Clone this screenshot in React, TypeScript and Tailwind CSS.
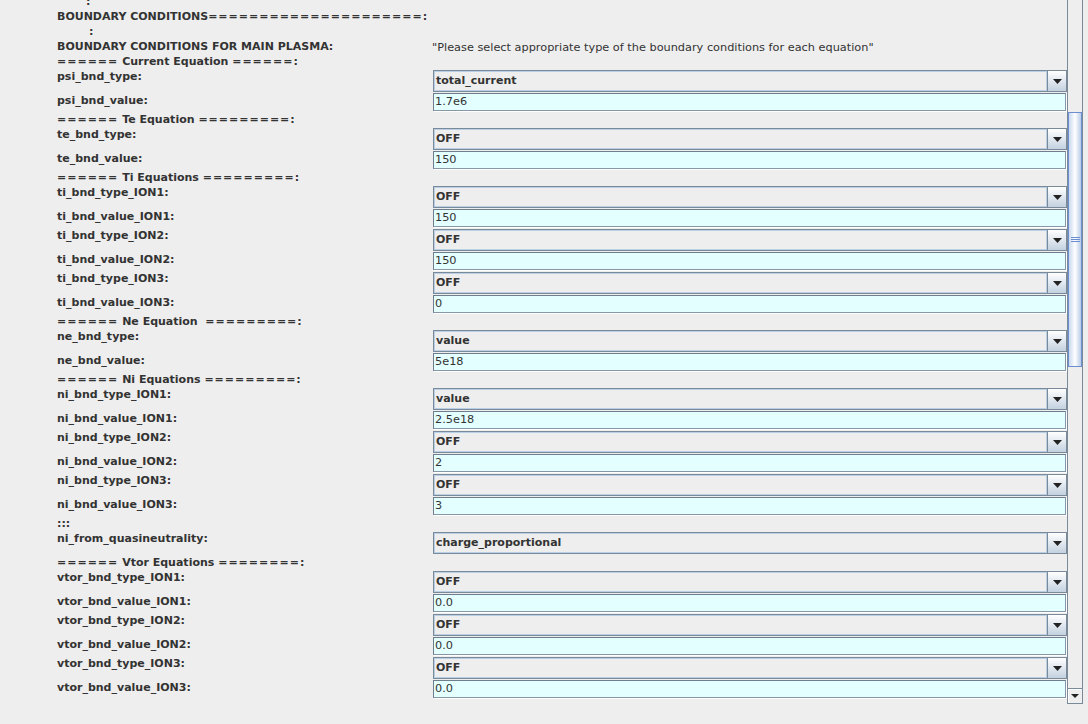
import React from "react";

type Row =
  | { k: "h"; t: string; indent?: number; right?: string }
  | { k: "c"; t: string; v: string }
  | { k: "f"; t: string; v: string };

const rows: Row[] = [
  { k: "h", t: ":", indent: 29 },
  { k: "h", t: "BOUNDARY CONDITIONS=====================:" },
  { k: "h", t: ":", indent: 32 },
  {
    k: "h",
    t: "BOUNDARY CONDITIONS FOR MAIN PLASMA:",
    right: '"Please select appropriate type of the boundary conditions for each equation"',
  },
  { k: "h", t: "====== Current Equation ======:" },
  { k: "c", t: "psi_bnd_type:", v: "total_current" },
  { k: "f", t: "psi_bnd_value:", v: "1.7e6" },
  { k: "h", t: "====== Te Equation =========:" },
  { k: "c", t: "te_bnd_type:", v: "OFF" },
  { k: "f", t: "te_bnd_value:", v: "150" },
  { k: "h", t: "====== Ti Equations =========:" },
  { k: "c", t: "ti_bnd_type_ION1:", v: "OFF" },
  { k: "f", t: "ti_bnd_value_ION1:", v: "150" },
  { k: "c", t: "ti_bnd_type_ION2:", v: "OFF" },
  { k: "f", t: "ti_bnd_value_ION2:", v: "150" },
  { k: "c", t: "ti_bnd_type_ION3:", v: "OFF" },
  { k: "f", t: "ti_bnd_value_ION3:", v: "0" },
  { k: "h", t: "====== Ne Equation\u00a0\u00a0=========:" },
  { k: "c", t: "ne_bnd_type:", v: "value" },
  { k: "f", t: "ne_bnd_value:", v: "5e18" },
  { k: "h", t: "====== Ni Equations =========:" },
  { k: "c", t: "ni_bnd_type_ION1:", v: "value" },
  { k: "f", t: "ni_bnd_value_ION1:", v: "2.5e18" },
  { k: "c", t: "ni_bnd_type_ION2:", v: "OFF" },
  { k: "f", t: "ni_bnd_value_ION2:", v: "2" },
  { k: "c", t: "ni_bnd_type_ION3:", v: "OFF" },
  { k: "f", t: "ni_bnd_value_ION3:", v: "3" },
  { k: "h", t: ":::" },
  { k: "c", t: "ni_from_quasineutrality:", v: "charge_proportional" },
  { k: "h", t: "====== Vtor Equations ========:" },
  { k: "c", t: "vtor_bnd_type_ION1:", v: "OFF" },
  { k: "f", t: "vtor_bnd_value_ION1:", v: "0.0" },
  { k: "c", t: "vtor_bnd_type_ION2:", v: "OFF" },
  { k: "f", t: "vtor_bnd_value_ION2:", v: "0.0" },
  { k: "c", t: "vtor_bnd_type_ION3:", v: "OFF" },
  { k: "f", t: "vtor_bnd_value_ION3:", v: "0.0" },
  { k: "h", t: ":", indent: 35 },
];

const Arrow = ({ w = 9, h = 5 }: { w?: number; h?: number }) => (
  <svg width={w} height={h} viewBox={`0 0 ${w} ${h}`}>
    <polygon points={`0,0 ${w},0 ${w / 2},${h}`} fill="#222222" />
  </svg>
);

function Label({ text, indent }: { text: string; indent?: number }) {
  const parts = text.split(/(=+)/);
  return (
    <div
      className="w-[376px] shrink-0 whitespace-pre font-bold text-[11px] leading-[15px] text-[#333333]"
      style={indent ? { paddingLeft: indent } : undefined}
    >
      {parts.map((p, i) =>
        p.startsWith("=") ? (
          <span key={i} className="tracking-[1px]">
            {p}
          </span>
        ) : (
          <React.Fragment key={i}>{p}</React.Fragment>
        )
      )}
    </div>
  );
}

function Combo({ value }: { value: string }) {
  return (
    <div className="mt-px h-[22px] w-[634px] flex border border-[#7a8a99] bg-[#eeeeee]">
      <div className="flex-1 flex items-center pl-[1px] border border-[#b8cfe5] font-bold text-[11px] text-[#333333]">
        {value}
      </div>
      <div className="w-[19px] flex items-center justify-center border-l border-[#7a8a99] bg-linear-to-b from-[#ffffff] to-[#c3d1e0]">
        <Arrow />
      </div>
    </div>
  );
}

function Field({ value }: { value: string }) {
  return (
    <div className="h-[18px] w-[633px] flex items-center pl-[1px] pt-px border border-[#8797a8] border-t-[#6e7e8f] border-l-[#6e7e8f] bg-[#e3ffff] text-[11.3px] text-[#333333] shadow-[1px_1px_0_#ffffff]">
      {value}
    </div>
  );
}

export default function App() {
  return (
    <div
      className="w-[1088px] h-[724px] bg-[#eeeeee] overflow-hidden flex"
      style={{ fontFamily: '"DejaVu Sans", Verdana, sans-serif' }}
    >
      <div className="w-[1067px] h-[704px] overflow-hidden shrink-0">
        <div className="-mt-[6px] pl-[57px] flex flex-col">
          {rows.map((r, i) => {
            if (r.k === "h") {
              return (
                <div key={i} className="flex h-[15px]">
                  <Label text={r.t} indent={r.indent} />
                  {r.right && (
                    <div className="-ml-px text-[11.3px] leading-[17px] text-[#333333] whitespace-pre">
                      {r.right}
                    </div>
                  )}
                </div>
              );
            }
            if (r.k === "c") {
              return (
                <div key={i} className="flex h-[24px]">
                  <Label text={r.t} />
                  <Combo value={r.v} />
                </div>
              );
            }
            return (
              <div key={i} className="flex h-[19px]">
                <Label text={r.t} />
                <Field value={r.v} />
              </div>
            );
          })}
        </div>
      </div>
      {/* vertical scrollbar */}
      <div className="w-[16px] shrink-0 flex flex-col">
        <div className="h-[688px] flex flex-col border-l border-r border-[#7a8a99] bg-[#eeeeee]">
          <div className="h-[112px]" />
          <div className="h-[255px] border border-[#6d8fd1] bg-linear-to-r from-[#c9d9ee] via-[#ffffff] to-[#b9cde6] flex items-center justify-center">
            <div className="flex flex-col gap-px">
              <div className="w-[9px] h-px bg-[#6d8fd1]" />
              <div className="w-[9px] h-px bg-[#6d8fd1]" />
              <div className="w-[9px] h-px bg-[#6d8fd1]" />
            </div>
          </div>
          <div className="flex-1" />
        </div>
        <div className="h-[16px] flex items-center justify-center border border-[#7a8a99] bg-[#eeeeee] shadow-[inset_1px_1px_0_#ffffff]">
          <Arrow w={8} h={4} />
        </div>
      </div>
    </div>
  );
}
